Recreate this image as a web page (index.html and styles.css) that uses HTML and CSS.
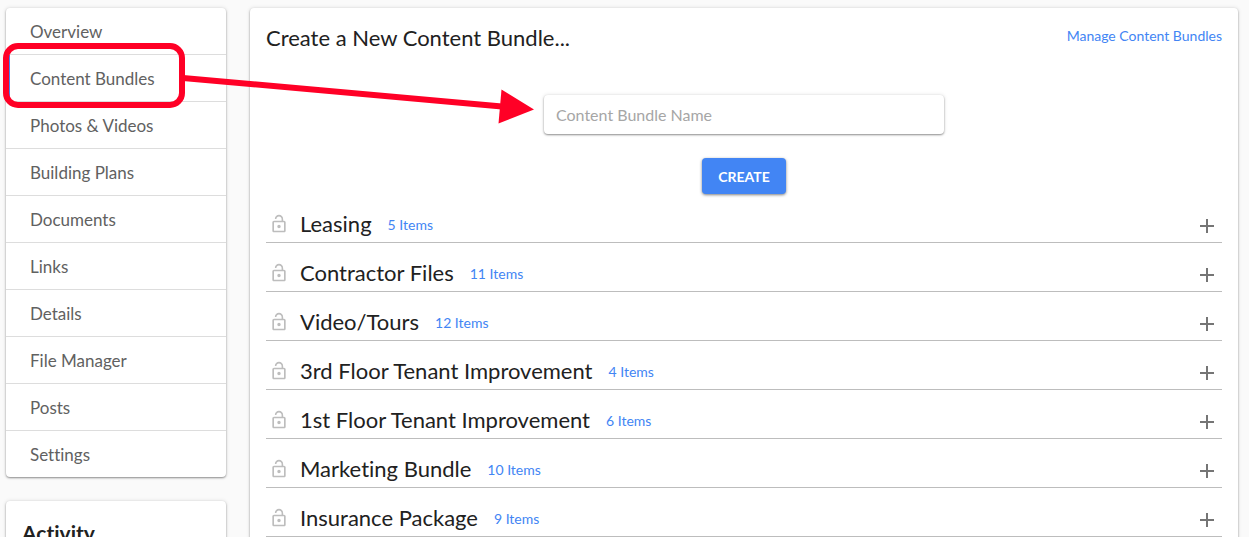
FILE: index.html
```
<!DOCTYPE html>
<html lang="en">

<head>
    <meta charset="UTF-8">
    <meta name="viewport" content="width=device-width, initial-scale=1.0">
    <title>Content Bundles</title>
    <link rel="stylesheet" href="styles.css">
</head>

<body>
    <!-- Shared icons -->
    <svg class="sprite" aria-hidden="true">
        <symbol id="lockOpen" viewBox="0 0 24 24">
            <path d="M12 17c1.1 0 2-.9 2-2s-.9-2-2-2-2 .9-2 2 .9 2 2 2zm6-9h-1V6c0-2.760-2.240-5-5-5S7 3.240 7 6h1.900c0-1.710 1.390-3.100 3.100-3.100 1.710 0 3.100 1.390 3.100 3.100v2H6c-1.100 0-2 .9-2 2v10c0 1.100.9 2 2 2h12c1.100 0 2-.9 2-2V10c0-1.100-.9-2-2-2zm0 12H6V10h12v10z" />
        </symbol>
        <symbol id="plus" viewBox="0 0 24 24">
            <path d="M19 13h-6v6h-2v-6H5v-2h6V5h2v6h6v2z" />
        </symbol>
    </svg>

    <aside class="sidebar">
        <nav class="card menu">
            <a href="#overview">Overview</a>
            <a href="#bundles" class="current">Content Bundles</a>
            <a href="#photos">Photos &amp; Videos</a>
            <a href="#plans">Building Plans</a>
            <a href="#documents">Documents</a>
            <a href="#links">Links</a>
            <a href="#details">Details</a>
            <a href="#files">File Manager</a>
            <a href="#posts">Posts</a>
            <a href="#settings">Settings</a>
        </nav>
        <section class="card activity">
            <h2>Activity</h2>
        </section>
    </aside>

    <main class="card content">
        <header class="contentHeader">
            <h1>Create a New Content Bundle...</h1>
            <a href="#manage">Manage Content Bundles</a>
        </header>
        <form class="bundleForm">
            <input type="text" name="bundleName" placeholder="Content Bundle Name" aria-label="Content Bundle Name">
            <button type="submit" class="createButton">CREATE</button>
        </form>
        <ul class="bundles">
            <li>
                <svg class="lock"><use href="#lockOpen" /></svg>
                <h2>Leasing</h2>
                <a href="#leasing">5 Items</a>
                <button type="button" class="expand" aria-label="Expand Leasing"><svg><use href="#plus" /></svg></button>
            </li>
            <li>
                <svg class="lock"><use href="#lockOpen" /></svg>
                <h2>Contractor Files</h2>
                <a href="#contractor">11 Items</a>
                <button type="button" class="expand" aria-label="Expand Contractor Files"><svg><use href="#plus" /></svg></button>
            </li>
            <li>
                <svg class="lock"><use href="#lockOpen" /></svg>
                <h2>Video/Tours</h2>
                <a href="#video">12 Items</a>
                <button type="button" class="expand" aria-label="Expand Video/Tours"><svg><use href="#plus" /></svg></button>
            </li>
            <li>
                <svg class="lock"><use href="#lockOpen" /></svg>
                <h2>3rd Floor Tenant Improvement</h2>
                <a href="#third-floor">4 Items</a>
                <button type="button" class="expand" aria-label="Expand 3rd Floor Tenant Improvement"><svg><use href="#plus" /></svg></button>
            </li>
            <li>
                <svg class="lock"><use href="#lockOpen" /></svg>
                <h2>1st Floor Tenant Improvement</h2>
                <a href="#first-floor">6 Items</a>
                <button type="button" class="expand" aria-label="Expand 1st Floor Tenant Improvement"><svg><use href="#plus" /></svg></button>
            </li>
            <li>
                <svg class="lock"><use href="#lockOpen" /></svg>
                <h2>Marketing Bundle</h2>
                <a href="#marketing">10 Items</a>
                <button type="button" class="expand" aria-label="Expand Marketing Bundle"><svg><use href="#plus" /></svg></button>
            </li>
            <li>
                <svg class="lock"><use href="#lockOpen" /></svg>
                <h2>Insurance Package</h2>
                <a href="#insurance">9 Items</a>
                <button type="button" class="expand" aria-label="Expand Insurance Package"><svg><use href="#plus" /></svg></button>
            </li>
        </ul>
    </main>

    <!-- Callout from the menu entry to the name field -->
    <svg class="callout" viewBox="0 0 540 130" aria-hidden="true">
        <rect x="6" y="46" width="176" height="59" rx="12" fill="none" stroke="#ff0026" stroke-width="6" />
        <path d="M183 78L502 106.500" fill="none" stroke="#ff0026" stroke-width="6" />
        <path d="M501.500 89.500L534 109.500L498.500 123.500z" fill="#ff0026" />
    </svg>
</body>

</html>
```

FILE: styles.css
```
* {
    box-sizing: border-box;
}

body {
    font-family: Lato, sans-serif;
    font-variant-ligatures: none;
    background-color: #fafafa;
    color: #212121;
    display: flex;
    gap: 24px;
    height: 100vh;
    margin: 0;
    padding: 8px 11px 0 6px;
    overflow: hidden;
}

a {
    color: #4285f4;
    font-size: 14px;
    text-decoration: none;
}

h1,
h2 {
    font-size: 22px;
    font-weight: normal;
    line-height: 28px;
    margin: 0;
}

.sprite {
    display: none;
}

.card {
    background: white;
    border-radius: 4px;
    box-shadow: 0 1px 2px rgba(0, 0, 0, 0.4), 0 0 4px rgba(0, 0, 0, 0.12);
}

/* Sidebar */
.sidebar {
    width: 220px;
    flex-shrink: 0;
}

.menu {
    overflow: hidden;
    margin-bottom: 24px;
}

.menu a {
    display: block;
    padding: 2px 24px 0;
    color: #616161;
    font-size: 17px;
    line-height: 44px;
    border-bottom: 1px solid #ddd;
}

.menu a:last-child {
    border-bottom: none;
}

.menu a.current {
    border-left: 4px solid #4285f4;
    padding-left: 20px;
}

.activity {
    padding: 18px 16px;
}

.activity h2 {
    font-size: 21px;
    font-weight: bold;
}

/* Main panel */
.content {
    flex: 1;
    min-width: 0;
    min-height: 100vh;
    padding: 16px;
}

.contentHeader {
    display: flex;
    justify-content: space-between;
}

.contentHeader a {
    line-height: 24px;
}

.bundleForm {
    display: flex;
    flex-direction: column;
    align-items: center;
    gap: 24px;
    margin: 43px 0 12px;
}

.bundleForm input {
    width: 400px;
    max-width: 100%;
    height: 39px;
    padding: 0 12px;
    border: none;
    border-radius: 4px;
    box-shadow: 0 1px 2px rgba(0, 0, 0, 0.4), 0 0 4px rgba(0, 0, 0, 0.12);
    font-family: inherit;
    font-size: 16px;
}

.bundleForm input::placeholder {
    color: #a6a6a6;
}

.createButton {
    background: #4285f4;
    color: white;
    border: none;
    height: 36px;
    padding: 0 16px;
    border-radius: 4px;
    box-shadow: 0 1px 3px rgba(0, 0, 0, 0.5);
    font-family: inherit;
    font-size: 14px;
    font-weight: bold;
    cursor: pointer;
}

.bundles {
    list-style: none;
    margin: 0;
    padding: 0;
}

.bundles li {
    display: flex;
    align-items: center;
    height: 49px;
    padding-top: 12px;
    border-bottom: 1px solid #bdbdbd;
}

.bundles li:first-child {
    height: 37px;
    padding-top: 0;
}

.lock {
    width: 20px;
    height: 20px;
    margin: 0 11px 0 3px;
    fill: #bdbdbd;
}

.bundles a {
    margin-left: 16px;
}

.expand {
    display: flex;
    margin-left: auto;
    padding: 4px 3px 0;
    background: none;
    border: none;
    cursor: pointer;
}

.expand svg {
    width: 24px;
    height: 24px;
    fill: #757575;
}

/* Drawn over the page */
.callout {
    position: absolute;
    top: 0;
    left: 0;
    width: 540px;
    height: 130px;
    pointer-events: none;
}
```
